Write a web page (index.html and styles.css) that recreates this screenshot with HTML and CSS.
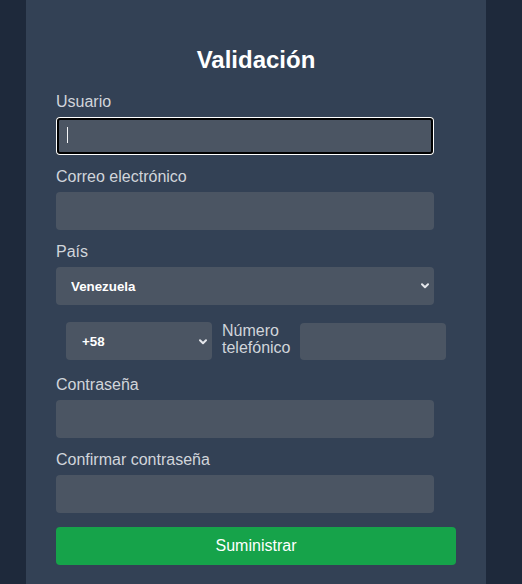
FILE: index.html
```html
<!DOCTYPE html>
<html lang="es">
<head>
<meta charset="utf-8">
<title>Validación</title>
<link rel="stylesheet" href="styles.css">
</head>
<body>
<main class="page">
  <form class="card">
    <h1 class="title">Validación</h1>

    <div class="field">
      <label class="label" for="usuario">Usuario</label>
      <div class="input-wrap">
        <input class="input input--focused" id="usuario" type="text">
        <span class="caret"></span>
      </div>
    </div>

    <div class="field">
      <label class="label" for="correo">Correo electrónico</label>
      <input class="input" id="correo" type="email">
    </div>

    <div class="field field--country">
      <label class="label" for="pais">País</label>
      <div class="select-wrap">
        <select class="select" id="pais"><option>Venezuela</option></select>
        <svg class="chevron" width="8" height="6" viewBox="0 0 8 6"><path d="M1 1.2 L4 4.2 L7 1.2" fill="none" stroke="#e5e7eb" stroke-width="2" stroke-linecap="round" stroke-linejoin="round"/></svg>
      </div>
    </div>

    <div class="phone-row">
      <div class="select-wrap select-wrap--code">
        <select class="select select--code"><option>+58</option></select>
        <svg class="chevron" width="8" height="6" viewBox="0 0 8 6"><path d="M1 1.2 L4 4.2 L7 1.2" fill="none" stroke="#e5e7eb" stroke-width="2" stroke-linecap="round" stroke-linejoin="round"/></svg>
      </div>
      <label class="phone-label" for="telefono">Número telefónico</label>
      <input class="input input--phone" id="telefono" type="tel">
    </div>

    <div class="field">
      <label class="label" for="clave">Contraseña</label>
      <input class="input" id="clave" type="password">
    </div>

    <div class="field field--last">
      <label class="label" for="clave2">Confirmar contraseña</label>
      <input class="input" id="clave2" type="password">
    </div>

    <button class="submit" type="button">Suministrar</button>
  </form>
</main>
</body>
</html>
```

FILE: styles.css
```css
html, body {
  margin: 0;
  padding: 0;
  height: 584px;
  overflow: hidden;
  background: #1e293b;
  font-family: "Liberation Sans", Arial, sans-serif;
}

.page {
  display: flex;
  padding-left: 26px;
}

.card {
  width: 460px;
  box-sizing: border-box;
  background: #334155;
  padding: 46px 30px 40px 30px;
  border-radius: 0 0 8px 8px;
  min-height: 620px;
}

.title {
  margin: 0 0 19px 0;
  font-size: 24px;
  line-height: 28px;
  font-weight: 700;
  color: #ffffff;
  text-align: center;
}

.field {
  display: flex;
  flex-direction: column;
  margin-bottom: 13px;
}

.field--country {
  margin-bottom: 17px;
}

.field--last {
  margin-bottom: 14px;
}

.label {
  display: block;
  font-size: 16px;
  line-height: 18px;
  color: #d1d5db;
  margin-bottom: 6px;
}

.input-wrap {
  position: relative;
  width: 378px;
}

.input {
  display: block;
  width: 378px;
  height: 38px;
  box-sizing: border-box;
  border: none;
  border-radius: 4px;
  background: #4b5563;
  color: #ffffff;
  font-family: inherit;
  font-size: 16px;
  padding: 0 10px;
  outline: none;
}

.input--focused {
  box-shadow: inset 0 0 0 1px #ffffff, inset 0 0 0 3px #000000;
}

.caret {
  position: absolute;
  left: 11px;
  top: 10px;
  width: 1px;
  height: 16px;
  background: #f3f4f6;
}

.select-wrap {
  position: relative;
  width: 378px;
}

.select {
  display: block;
  width: 100%;
  height: 38px;
  box-sizing: border-box;
  border: none;
  border-radius: 4px;
  background: #4b5563;
  color: #ffffff;
  font-family: inherit;
  font-size: 13.333px;
  font-weight: 700;
  padding: 0 0 0 15px;
  appearance: none;
  -webkit-appearance: none;
  outline: none;
}

.chevron {
  position: absolute;
  right: 5px;
  top: 16px;
  pointer-events: none;
}

.phone-row {
  display: flex;
  align-items: flex-start;
  margin: 0 10px 16px 10px;
}

.select-wrap--code {
  width: 146px;
  flex: none;
}

.select--code {
  padding-left: 16px;
}

.select-wrap--code .chevron {
  right: 5px;
  top: 17px;
}

.phone-label {
  flex: 1;
  margin: 0 8px 0 10px;
  font-size: 16px;
  line-height: 16.5px;
  color: #d1d5db;
  padding-top: 1px;
}

.input--phone {
  width: 146px;
  height: 37px;
  flex: none;
  margin-top: 1px;
}

.submit {
  display: block;
  width: 400px;
  height: 38px;
  border: none;
  border-radius: 4px;
  background: #16a34a;
  color: #ffffff;
  font-family: inherit;
  font-size: 16px;
  padding: 0;
}
```
